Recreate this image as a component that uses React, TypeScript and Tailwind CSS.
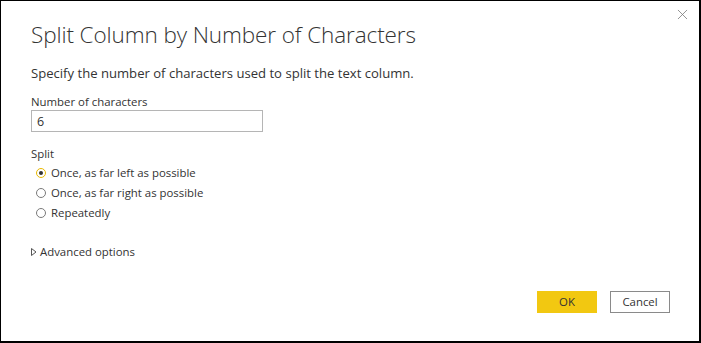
import { X } from "lucide-react";

const options = [
  { id: "left", label: "Once, as far left as possible", checked: true },
  { id: "right", label: "Once, as far right as possible", checked: false },
  { id: "repeat", label: "Repeatedly", checked: false },
];

const Radio = ({ checked }: { checked: boolean }) => (
  <span
    className={
      checked
        ? "flex h-[10px] w-[10px] items-center justify-center rounded-full border border-[#e8b800]"
        : "flex h-[10px] w-[10px] items-center justify-center rounded-full border border-[#7a7a7a]"
    }
  >
    {checked && <span className="h-[4px] w-[4px] rounded-full bg-[#333]" />}
  </span>
);

export default function App() {
  return (
    <div className="h-[343px] w-[701px] bg-white font-['Open_Sans',sans-serif] text-[#333]">
      <div className="relative flex h-full flex-col border-t border-l border-r-2 border-b-2 border-black pl-[30px] pt-[18px]">
        <button className="absolute right-[8px] top-[5px] text-[#777]">
          <X size={17} strokeWidth={1.1} />
        </button>

        <h1 className="text-[22.5px] font-light leading-[32px] tracking-[-0.1px]">
          Split Column by Number of Characters
        </h1>
        <p className="mt-[14px] text-[13.1px] leading-[16px]">
          Specify the number of characters used to split the text column.
        </p>

        <label className="mt-[13px] text-[11.4px] leading-[16px]">Number of characters</label>
        <input
          defaultValue="6"
          className="mt-0 h-[22px] w-[232px] border border-[#b5b5b5] px-[5px] text-[12.5px] outline-none"
        />

        <div className="mt-[14px] text-[11.4px] leading-[16px]">Split</div>
        <div className="mt-[3px] flex flex-col gap-[4px] pl-[5px]">
          {options.map((o) => (
            <label key={o.id} className="flex h-[16px] items-center gap-[5px] text-[11.4px]">
              <Radio checked={o.checked} />
              {o.label}
            </label>
          ))}
        </div>

        <div className="mt-[23px] flex items-center gap-[3px] text-[11.4px] leading-[16px]">
          <svg width="6" height="8" viewBox="0 0 6 8" className="text-[#555]">
            <path d="M0.5 0.5 L5 4 L0.5 7.5 Z" fill="none" stroke="currentColor" strokeWidth="1" />
          </svg>
          Advanced options
        </div>

        <div className="mt-auto mb-[28px] mr-[29px] flex justify-end gap-[13px]">
          <button className="h-[22px] w-[60px] bg-[#f2c811] text-[11.4px]">OK</button>
          <button className="h-[22px] w-[60px] border border-[#8a8a8a] bg-white text-[11.4px]">
            Cancel
          </button>
        </div>
      </div>
    </div>
  );
}
